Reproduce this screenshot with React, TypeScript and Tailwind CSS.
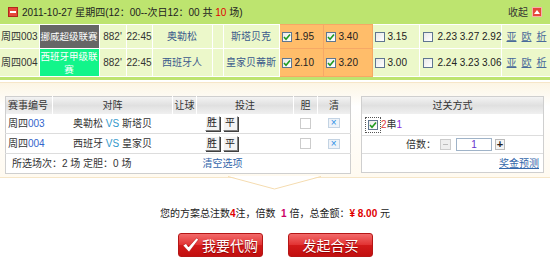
import React from 'react';

const matches = [
  {
    no: '003',
    league: '挪威超级联赛',
    leagueBg: 'bg-[#666666]',
    home: '奥勒松',
    away: '斯塔贝克',
    odds: ['1.95', '3.40', '3.15'],
    avg: '2.23 3.27 2.92',
    rowH: 'h-[24px]',
    short: ['奥勒松', '斯塔贝'],
  },
  {
    no: '004',
    league: '西班牙甲级联赛',
    leagueBg: 'bg-[#12f58a]',
    home: '西班牙人',
    away: '皇家贝蒂斯',
    odds: ['2.10', '3.20', '3.00'],
    avg: '2.24 3.23 3.06',
    rowH: 'h-[28px]',
    short: ['西班牙', '皇家贝'],
  },
];

function Box({ checked }: { checked?: boolean }) {
  return (
    <span className="inline-flex items-center justify-center w-[10px] h-[10px] border border-[#5f7690] bg-gradient-to-br from-[#e9e9e9] to-white flex-shrink-0">
      {checked && (
        <svg width="8" height="8" viewBox="0 0 8 8">
          <path d="M1 4 L3 6.2 L7 1.5" fill="none" stroke="#1f9a1f" strokeWidth="1.6" />
        </svg>
      )}
    </span>
  );
}

function BetBtn({ label }: { label: string }) {
  return (
    <span className="inline-flex items-center justify-center w-[15px] h-[15px] bg-[#f4f4f4] border border-t-white border-l-white border-r-[#808080] border-b-[#808080] shadow-[1px_1px_0_#404040] text-[10px] leading-none text-[#222]">
      {label}
    </span>
  );
}

export default function App() {
  return (
    <div className="w-[550px] h-[264px] bg-white overflow-hidden font-['Liberation_Sans','Noto_Sans_CJK_SC',sans-serif] text-[10px] text-[#333]">
      {/* Day header + matches */}
      <div className="bg-[#bde46f] pb-[3px]">
        <div className="h-[24px] flex items-center pl-[8px] pr-[8px]">
          <span className="w-[10px] h-[10px] bg-[#e5473a] border border-[#b3261c] flex items-center justify-center">
            <span className="w-[6px] h-[2px] bg-white" />
          </span>
          <span className="ml-[4px] text-[10px] text-[#222]">
            2011-10-27 星期四(12：00--次日12：00 共 <span className="text-[#e00000]">10</span> 场)
          </span>
          <span className="ml-auto text-[10px] text-[#333]">收起</span>
          <span className="ml-[4px] w-[10px] h-[10px] bg-[#e5473a] border border-[#f7b0a8] flex items-center justify-center">
            <svg width="6" height="4" viewBox="0 0 6 4">
              <path d="M0 4 L3 0 L6 4 Z" fill="white" />
            </svg>
          </span>
        </div>
        <table className="w-full table-fixed border-collapse bg-[#ecf8ca]">
          <colgroup>
            <col className="w-[39px]" />
            <col className="w-[60px]" />
            <col className="w-[27px]" />
            <col className="w-[26px]" />
            <col className="w-[60px]" />
            <col className="w-[11px]" />
            <col className="w-[56px]" />
            <col className="w-[44px]" />
            <col className="w-[49px]" />
            <col className="w-[47px]" />
            <col className="w-[82px]" />
            <col className="w-[49px]" />
          </colgroup>
          <tbody>
            {matches.map((m) => (
              <tr key={m.no} className={m.rowH}>
                <td className="border border-white border-l-0 pl-[1px] whitespace-nowrap">周四{m.no}</td>
                <td className={`border border-white ${m.leagueBg} text-white text-[9.5px] leading-[13px] text-center px-0`}>
                  {m.league}
                </td>
                <td className="border border-white text-center">882'</td>
                <td className="border border-white text-center">22:45</td>
                <td className="border border-white text-center text-[#3b5a8c]">{m.home}</td>
                <td className="border border-white" />
                <td className="border border-white text-center text-[#3b5a8c] whitespace-nowrap">{m.away}</td>
                <td className="border border-[#f6a866] bg-[#ffbd6a] pl-[2px]">
                  <span className="flex items-center gap-[3px] text-[#222]">
                    <Box checked />
                    {m.odds[0]}
                  </span>
                </td>
                <td className="border border-[#f6a866] bg-[#ffbd6a] pl-[2px]">
                  <span className="flex items-center gap-[3px] text-[#222]">
                    <Box checked />
                    {m.odds[1]}
                  </span>
                </td>
                <td className="border border-white pl-[2px]">
                  <span className="flex items-center gap-[3px] text-[#222]">
                    <Box />
                    {m.odds[2]}
                  </span>
                </td>
                <td className="border border-white pl-[3px]">
                  <span className="flex items-center gap-[5px] text-[#222] whitespace-nowrap">
                    <Box />
                    {m.avg}
                  </span>
                </td>
                <td className="border border-white border-r-0 pl-[5px]">
                  <span className="flex gap-[5px] text-[#4a6b9a] underline">
                    <span>亚</span>
                    <span>欧</span>
                    <span>析</span>
                  </span>
                </td>
              </tr>
            ))}
          </tbody>
        </table>
      </div>

      {/* Selection box */}
      <div className="relative mt-[2px] h-[96px] border-y border-[#f6e6c8] bg-gradient-to-b from-[#fcf5e4] via-white via-[25%] to-[#fffaf0] px-[5px] pt-[13px] flex">
        <table className="w-[345px] h-[77px] table-fixed border-collapse border border-[#cfcfcf] bg-white self-start">
          <colgroup>
            <col className="w-[47px]" />
            <col className="w-[120px]" />
            <col className="w-[24px]" />
            <col className="w-[97px]" />
            <col className="w-[24px]" />
            <col className="w-[33px]" />
          </colgroup>
          <thead>
            <tr className="h-[17px] bg-gradient-to-b from-[#f3f3f3] via-[#e0e0e0] to-[#f0f0f0] text-[#333]">
              <th className="font-normal text-left pl-[2px]">赛事编号</th>
              <th className="font-normal border-l border-white">对阵</th>
              <th className="font-normal border-l border-white">让球</th>
              <th className="font-normal border-l border-white">投注</th>
              <th className="font-normal border-l border-white">胆</th>
              <th className="font-normal border-l border-white">清</th>
            </tr>
          </thead>
          <tbody>
            {matches.map((m) => (
              <tr key={m.no} className="h-[20px] border-b border-[#dddddd]">
                <td className="pl-[2px]">
                  周四<span className="text-[#3366cc]">{m.no}</span>
                </td>
                <td className="text-center whitespace-nowrap">
                  {m.short[0]} <span className="text-[#3399cc]">VS</span> {m.short[1]}
                </td>
                <td />
                <td className="pl-[8px]">
                  <span className="flex gap-[3px]">
                    <BetBtn label="胜" />
                    <BetBtn label="平" />
                  </span>
                </td>
                <td>
                  <span className="mx-auto block w-[11px] h-[11px] border border-[#cccccc] bg-white" />
                </td>
                <td>
                  <span className="mx-auto flex items-center justify-center w-[12px] h-[10px] border border-[#c3d3e3] bg-[#eef3f9] text-[#2b8fe6] text-[10px] leading-none">
                    ×
                  </span>
                </td>
              </tr>
            ))}
            <tr className="h-[20px]">
              <td colSpan={3} className="pl-[6px] whitespace-nowrap">
                所选场次：2 场 定胆：0 场
              </td>
              <td colSpan={3} className="pl-[6px] text-[#3366aa]">
                清空选项
              </td>
            </tr>
          </tbody>
        </table>

        <div className="ml-[10px] w-[183px] self-start border border-[#cfcfcf] bg-white">
          <div className="h-[17px] flex items-center justify-center bg-gradient-to-b from-[#f3f3f3] via-[#e0e0e0] to-[#f0f0f0]">
            过关方式
          </div>
          <div className="h-[22px] flex items-center border-b border-[#dddddd] pl-[3px]">
            <span className="p-[2px] border border-dotted border-[#555]">
              <span className="flex">
                <Box checked />
              </span>
            </span>
            <span className="text-[#e04040]">2</span>
            <span>串</span>
            <span className="text-[#8a2be2]">1</span>
          </div>
          <div className="h-[18px] flex items-center border-b border-[#dddddd] pl-[44px]">
            <span>倍数：</span>
            <span className="ml-[4px] w-[11px] h-[11px] flex items-center justify-center border border-[#cccccc] bg-[#eeeeee]">
              <span className="w-[5px] h-[1px] bg-[#bbbbbb]" />
            </span>
            <span className="ml-[5px] w-[36px] h-[13px] flex items-center justify-center border border-[#9fb3c8] bg-white text-[#6633cc] text-[10px]">
              1
            </span>
            <span className="ml-[3px] w-[10px] h-[11px] flex items-center justify-center border border-[#bbbbbb] bg-[#f4f4f4] text-[11px] leading-none text-[#222] font-bold">
              +
            </span>
          </div>
          <div className="h-[18px] flex items-center justify-end pr-[4px]">
            <span className="text-[#3366aa] underline">奖金预测</span>
          </div>
        </div>

        <svg className="absolute left-[228px] top-[calc(100%-1px)]" width="93" height="15" viewBox="0 0 93 15">
          <polygon points="0,0 46.5,13 93,0" fill="white" />
          <polyline points="0,0.5 46.5,13 93,0.5" fill="none" stroke="#f5dcb0" strokeWidth="1" />
        </svg>
      </div>

      {/* Summary */}
      <div className="mt-[28px] h-[14px] flex items-center justify-center text-[10px] text-[#222]">
        您的方案总注数<span className="text-[#e00000] font-bold">4</span>注，倍数&nbsp;&nbsp;<span className="text-[#cc0066] font-bold">1</span>&nbsp;倍，总金额：<span className="text-[#e00000] font-bold">¥ 8.00</span>&nbsp;元
      </div>

      <div className="mt-[13px] flex justify-center gap-[25px] pl-[1px]">
        <button className="w-[85px] h-[24px] rounded-[3px] border border-[#b51616] bg-[linear-gradient(#f26a6a,#e23434_48%,#d21a1a_52%,#c20f0f)] flex items-center pl-[3px] text-white text-[14px] font-['Noto_Sans_CJK_SC',sans-serif] [text-shadow:0_1px_1px_#8a0000]">
          <svg width="17" height="16" viewBox="0 0 17 16" className="mr-[3px]">
            <path d="M1 8.5 L4 6.5 L6.5 10 L14.5 1 L16.5 2.5 L7 15 Z" fill="white" stroke="#a00" strokeWidth="0.5" />
          </svg>
          我要代购
        </button>
        <button className="w-[85px] h-[24px] rounded-[3px] border border-[#b51616] bg-[linear-gradient(#f26a6a,#e23434_48%,#d21a1a_52%,#c20f0f)] flex items-center justify-center text-white text-[14px] font-['Noto_Sans_CJK_SC',sans-serif] [text-shadow:0_1px_1px_#8a0000]">
          发起合买
        </button>
      </div>
    </div>
  );
}
